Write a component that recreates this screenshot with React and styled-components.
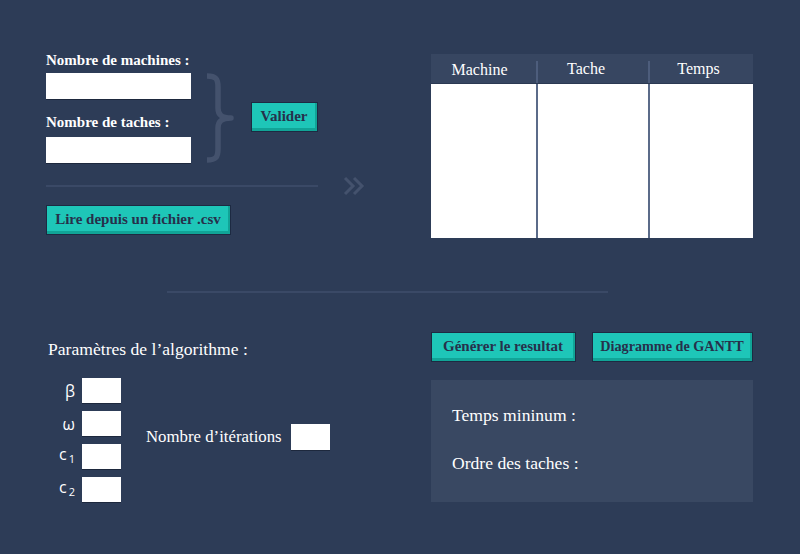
import React from "react";
import styled, { createGlobalStyle } from "styled-components";

const Global = createGlobalStyle`
  html, body { margin: 0; padding: 0; background: #2d3c57; }
  body { font-family: "Liberation Serif", "Times New Roman", serif; color: #ffffff; }
  * { box-sizing: border-box; }
`;

const Page = styled.div`
  width: 800px;
  height: 554px;
  background: #2d3c57;
  padding: 51px 47px 0 46px;
  display: flex;
  flex-direction: column;
  overflow: hidden;
`;

const Top = styled.div`
  display: flex;
  justify-content: space-between;
  align-items: flex-start;
`;

const LeftPanel = styled.div`
  display: flex;
  flex-direction: column;
  align-items: flex-start;
`;

const FormRow = styled.div`
  display: flex;
  align-items: flex-start;
`;

const Fields = styled.div`
  display: flex;
  flex-direction: column;
  width: 145px;
`;

const FieldLabel = styled.label`
  font-weight: 700;
  font-size: 15px;
  line-height: 18px;
  white-space: nowrap;
  margin-top: ${(p) => (p.$spaced ? "14px" : "0")};
  margin-bottom: ${(p) => (p.$spaced ? "6px" : "4px")};
`;

const TextInput = styled.input`
  display: block;
  border: none;
  outline: none;
  background: #ffffff;
  width: ${(p) => p.$w || "145px"};
  height: ${(p) => p.$h || "26px"};
  padding: 0 4px;
  box-shadow: 0 1px 0 #1d283d;
  font-family: inherit;
`;

const BraceSvg = styled.svg`
  width: 30px;
  height: 90px;
  margin: 22px 0 0 14px;
  flex: none;
`;

const Button = styled.button`
  font-family: "Liberation Serif", "Times New Roman", serif;
  font-weight: 700;
  font-size: ${(p) => p.$fs || "15px"};
  color: #26304b;
  background: #1ec6b8;
  border: 1px solid #1d2a42;
  box-shadow: inset -2px -3px 0 #11a497;
  height: 30px;
  width: ${(p) => p.$w || "auto"};
  padding: 0 6px 2px 5px;
  text-align: center;
  white-space: nowrap;
  cursor: pointer;
  margin: ${(p) => p.$m || "0"};
`;

const DividerRow = styled.div`
  display: flex;
  align-items: center;
  margin-top: 12px;
`;

const Rule = styled.div`
  width: 272px;
  height: 2px;
  background: #3a4966;
`;

const ChevronSvg = styled.svg`
  width: 22px;
  height: 22px;
  margin-left: 25px;
`;

const Table = styled.div`
  margin-top: 3px;
  width: 322px;
  height: 184px;
  display: grid;
  grid-template-columns: 105px 112px 105px;
`;

const Column = styled.div`
  display: flex;
  flex-direction: column;
`;

const HeaderCell = styled.div`
  height: 30px;
  background: #374661;
  border-bottom: 1px solid #2b3952;
  padding-top: 7px;
`;

const HeaderLabel = styled.div`
  height: 22px;
  border-left: ${(p) => (p.$divided ? "2px solid #4d5d7c" : "none")};
  text-align: center;
  font-size: 16px;
  line-height: 16px;
  color: #ffffff;
  padding-top: ${(p) => p.$dy || "0"};
  padding-right: ${(p) => p.$shift || "0"};
`;

const BodyCell = styled.div`
  flex: 1;
  background: #ffffff;
  border-left: ${(p) => (p.$divided ? "2px solid #5b6b89" : "none")};
`;

const SectionRule = styled.div`
  width: 441px;
  height: 2px;
  background: #3a4966;
  margin: 53px 0 0 121px;
`;

const Bottom = styled.div`
  display: flex;
  justify-content: space-between;
  align-items: flex-start;
  margin-top: 39px;
`;

const Params = styled.div`
  padding: 7px 0 0 2px;
  display: flex;
  flex-direction: column;
`;

const ParamsTitle = styled.div`
  font-size: 17.6px;
  line-height: 20px;
`;

const ParamsBody = styled.div`
  display: flex;
  align-items: center;
  margin-top: 19px;
`;

const GreekList = styled.div`
  display: flex;
  flex-direction: column;
  gap: 8px;
`;

const GreekRow = styled.div`
  display: grid;
  grid-template-columns: 29px 39px;
  column-gap: 5px;
  align-items: center;
`;

const GreekLabel = styled.span`
  font-family: "Open Sans", "Noto Sans", sans-serif;
  font-size: 16px;
  line-height: 20px;
  text-align: right;
  padding-right: 2px;
  color: #ffffff;
  sub {
    font-size: 11px;
    vertical-align: -3px;
    margin-left: 2px;
  }
`;

const Iterations = styled.div`
  display: flex;
  align-items: center;
  margin: 0 0 6px 25px;
  gap: 9px;
`;

const IterLabel = styled.span`
  font-size: 16.8px;
  line-height: 20px;
  white-space: nowrap;
`;

const Results = styled.div`
  width: 322px;
  display: flex;
  flex-direction: column;
`;

const Actions = styled.div`
  display: flex;
  justify-content: space-between;
`;

const ResultBox = styled.div`
  margin-top: 18px;
  height: 122px;
  background: #394862;
  padding: 25px 0 0 21px;
  display: flex;
  flex-direction: column;
  gap: 28px;
`;

const ResultLine = styled.div`
  font-size: 17.6px;
  line-height: 20px;
`;

const Brace = () => (
  <BraceSvg viewBox="0 0 30 90" fill="none">
    <path
      d="M2 3 C11 3 13 6 13 14 L13 35 C13 41 16 45 26 45 C16 45 13 49 13 55 L13 76 C13 84 11 87 2 87"
      stroke="#44526d"
      strokeWidth="5.5"
      strokeLinejoin="round"
    />
  </BraceSvg>
);

const Chevrons = () => (
  <ChevronSvg viewBox="0 0 22 22" fill="none">
    <path d="M2 3 L10 11 L2 19" stroke="#44526d" strokeWidth="3" />
    <path d="M11 3 L19 11 L11 19" stroke="#44526d" strokeWidth="3" />
  </ChevronSvg>
);

const columns = [
  { name: "Machine", dy: "1px", shift: "8px" },
  { name: "Tache", dy: "0", shift: "14px" },
  { name: "Temps", dy: "0", shift: "6px" },
];

const greek = [
  { key: "b", label: <>β</> },
  { key: "w", label: <>ω</> },
  { key: "c1", label: <>c<sub>1</sub></> },
  { key: "c2", label: <>c<sub>2</sub></> },
];

export default function App() {
  return (
    <>
      <Global />
      <Page>
        <Top>
          <LeftPanel>
            <FormRow>
              <Fields>
                <FieldLabel>Nombre de machines :</FieldLabel>
                <TextInput />
                <FieldLabel $spaced>Nombre de taches :</FieldLabel>
                <TextInput />
              </Fields>
              <Brace />
              <Button $w="67px" $m="51px 0 0 16px">Valider</Button>
            </FormRow>
            <DividerRow>
              <Rule />
              <Chevrons />
            </DividerRow>
            <Button $w="185px" $m="8px 0 0 0">Lire depuis un fichier .csv</Button>
          </LeftPanel>
          <Table>
            {columns.map((c, i) => (
              <Column key={c.name}>
                <HeaderCell>
                  <HeaderLabel $divided={i > 0} $dy={c.dy} $shift={c.shift}>
                    {c.name}
                  </HeaderLabel>
                </HeaderCell>
                <BodyCell $divided={i > 0} />
              </Column>
            ))}
          </Table>
        </Top>
        <SectionRule />
        <Bottom>
          <Params>
            <ParamsTitle>Paramètres de l’algorithme :</ParamsTitle>
            <ParamsBody>
              <GreekList>
                {greek.map((g) => (
                  <GreekRow key={g.key}>
                    <GreekLabel>{g.label}</GreekLabel>
                    <TextInput $w="39px" $h="25px" />
                  </GreekRow>
                ))}
              </GreekList>
              <Iterations>
                <IterLabel>Nombre d’itérations</IterLabel>
                <TextInput $w="39px" $h="26px" />
              </Iterations>
            </ParamsBody>
          </Params>
          <Results>
            <Actions>
              <Button $w="145px">Générer le resultat</Button>
              <Button $w="161px" $fs="14.2px">Diagramme de GANTT</Button>
            </Actions>
            <ResultBox>
              <ResultLine>Temps mininum :</ResultLine>
              <ResultLine>Ordre des taches :</ResultLine>
            </ResultBox>
          </Results>
        </Bottom>
      </Page>
    </>
  );
}
